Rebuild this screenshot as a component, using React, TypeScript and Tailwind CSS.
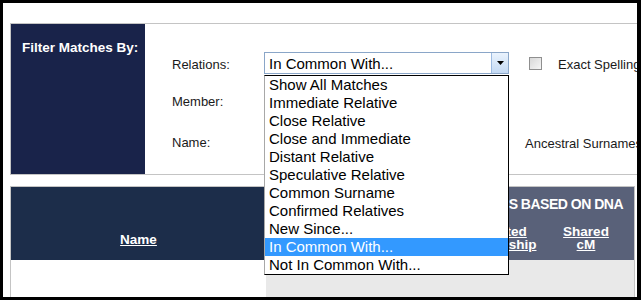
import React from 'react';

const options = [
  'Show All Matches',
  'Immediate Relative',
  'Close Relative',
  'Close and Immediate',
  'Distant Relative',
  'Speculative Relative',
  'Common Surname',
  'Confirmed Relatives',
  'New Since...',
  'In Common With...',
  'Not In Common With...',
];

const selected = 'In Common With...';

function SelectBox() {
  return (
    <div className="flex h-[22px] w-[245px] items-center border border-[#8aa6c8] bg-white">
      <span className="flex-1 pl-[4px] text-[15px] leading-none text-black">{selected}</span>
      <div className="flex h-[20px] w-[17px] items-center justify-center border-l border-[#9dbbe2] bg-gradient-to-b from-[#eaf3fd] to-[#c4daf4]">
        <svg width="7" height="4" viewBox="0 0 7 4">
          <path d="M0 0h7L3.5 4z" fill="#000" />
        </svg>
      </div>
    </div>
  );
}

function DropdownList() {
  return (
    <div className="absolute left-[261px] top-[72px] w-[245px] border border-black border-l-[#a8a8a8] bg-white">
      {options.map((o) => (
        <div
          key={o}
          className={`h-[18px] pl-[4px] text-[15px] leading-[18px] ${
            o === selected ? 'bg-[#3399ff] text-white' : 'text-black'
          }`}
        >
          {o}
        </div>
      ))}
    </div>
  );
}

export default function App() {
  return (
    <div className="h-[300px] w-[641px] overflow-hidden bg-black pl-[3px] pt-[3px] font-['Liberation_Sans',Arial,sans-serif]">
      <div className="relative h-[294px] w-[634px] overflow-hidden bg-white">
        <div className="h-[20px]" />

        {/* filter panel */}
        <div className="ml-[7px] flex h-[152px] w-[660px] border-y border-l border-[#c4c4c4]">
          <div className="w-[134px] bg-[#19234a] pl-[11px] pt-[14px]">
            <p className="text-[13.5px] font-bold text-white">Filter Matches By:</p>
          </div>
          <div className="flex-1 pl-[27px] pt-[28px] text-[13px] text-[#1a1a1a]">
            <div className="flex h-[22px] items-center">
              <span className="w-[92px] pt-[4px]">Relations:</span>
              <SelectBox />
              <span className="ml-[20px] h-[13px] w-[13px] border border-[#8f8f8f] bg-gradient-to-br from-[#d8d8d8] to-[#f6f6f6]" />
              <span className="ml-[16px] pt-[4px]">Exact Spelling</span>
            </div>
            <div className="mt-[15px] flex h-[22px] items-center">
              <span className="w-[92px] pt-[4px]">Member:</span>
            </div>
            <div className="mt-[19px] flex h-[22px] items-center">
              <span className="w-[92px] pt-[4px]">Name:</span>
              <span className="w-[261px]" />
              <span className="pt-[5px]">Ancestral Surnames</span>
            </div>
          </div>
        </div>

        <div className="h-[11px]" />

        {/* matches table */}
        <div className="ml-[7px] w-[625px] border-l border-r border-t border-[#c4c4c4]">
          <div className="flex h-[73px] text-[13.5px] font-bold text-white">
            <div className="flex w-[255px] items-end justify-center bg-[#1c2d4a] pb-[12px]">
              <span className="leading-[16px] underline">Name</span>
            </div>
            <div className="flex flex-1 flex-col bg-[#596179]">
              <div className="flex h-[30px] justify-end pr-[11px] pt-[9px]">
                <span className="text-[14px] leading-[16px] tracking-[-0.5px]">MATCHES BASED ON DNA</span>
              </div>
              <div className="flex flex-1 justify-end pr-[3px] pt-[8px]">
                <div className="w-[90px] text-center leading-[13px] underline">
                  Predicted
                  <br />
                  Relationship
                </div>
                <div className="w-[90px] text-center leading-[13px] underline">
                  Shared
                  <br />
                  cM
                </div>
              </div>
            </div>
          </div>
          <div className="flex h-[40px]">
            <div className="w-[255px] bg-white" />
            <div className="flex-1 bg-[#e9e9e9]" />
          </div>
        </div>

        <DropdownList />
      </div>
    </div>
  );
}
